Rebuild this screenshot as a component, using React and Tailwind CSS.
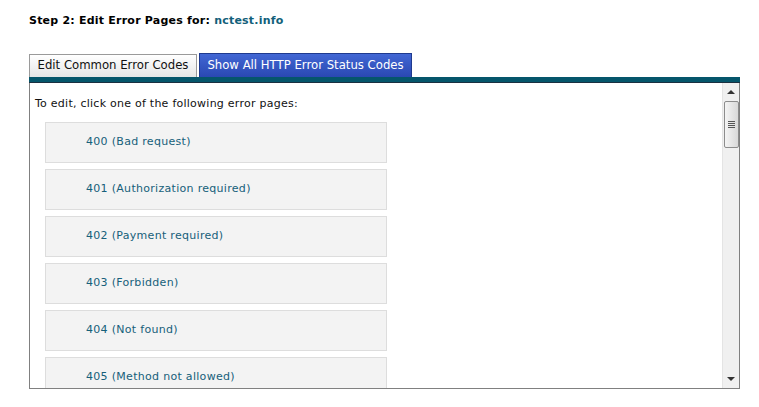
import React from 'react';

const errorPages = [
  '400 (Bad request)',
  '401 (Authorization required)',
  '402 (Payment required)',
  '403 (Forbidden)',
  '404 (Not found)',
  '405 (Method not allowed)',
];

const App = () => {
  return (
    <div className="w-[759px] h-[407px] bg-white overflow-hidden font-['DejaVu_Sans',Verdana,sans-serif] text-black">
      <div className="pl-[29px] pt-[14px]">
        <h2 className="text-[11px] font-bold leading-[14px] tracking-[0.22px]">
          Step 2: Edit Error Pages for: <span className="text-[#12607a]">nctest.info</span>
        </h2>

        <div className="w-[711px] mt-[25px]">
          <div className="flex items-end gap-[2px] h-[24px]">
            <div className="h-[23px] w-[168px] border border-b-0 border-[#9a9a9a] bg-gradient-to-b from-white to-[#e6e6e6] flex items-center justify-center text-[11.7px] text-[#111]">
              Edit Common Error Codes
            </div>
            <div className="h-[24px] w-[213px] border border-b-0 border-[#1f3a8f] bg-gradient-to-b from-[#4267d4] to-[#2a48b2] flex items-center justify-center text-[11.7px] text-white">
              Show All HTTP Error Status Codes
            </div>
          </div>
          <div className="h-[6px] bg-[#05566b] border-b border-[#1b3040]"></div>

          <div className="h-[306px] border border-t-0 border-[#808080] flex">
            <div className="flex-1 overflow-hidden pt-[14px] pl-[5px]">
              <p className="text-[11px] leading-[14px] tracking-[0.25px] text-[#111]">To edit, click one of the following error pages:</p>
              <div className="mt-[11px] ml-[10px] flex flex-col gap-[6px]">
                {errorPages.map((page) => (
                  <div
                    key={page}
                    className="w-[342px] h-[41px] shrink-0 border border-[#dddddd] bg-[#f3f3f3] flex items-center pl-[40px] pb-[1px] text-[11px] tracking-[0.3px] text-[#16607a]"
                  >
                    {page}
                  </div>
                ))}
              </div>
            </div>

            <div className="w-[17px] bg-[#f0f0f0] border-l border-[#e4e4e4] flex flex-col items-center">
              <div className="h-[18px] flex items-center justify-center">
                <div className="w-0 h-0 border-l-[4px] border-r-[4px] border-b-[4px] border-l-transparent border-r-transparent border-b-[#333]"></div>
              </div>
              <div className="w-[15px] h-[47px] rounded-[2px] border border-[#8c8c8c] bg-gradient-to-r from-[#f4f4f4] to-[#d8d8d8] flex flex-col items-center justify-center gap-[1px]">
                <div className="w-[7px] h-[1px] bg-[#555]"></div>
                <div className="w-[7px] h-[1px] bg-[#555]"></div>
                <div className="w-[7px] h-[1px] bg-[#555]"></div>
                <div className="w-[7px] h-[1px] bg-[#555]"></div>
              </div>
              <div className="flex-1"></div>
              <div className="h-[18px] flex items-center justify-center">
                <div className="w-0 h-0 border-l-[4px] border-r-[4px] border-t-[4px] border-l-transparent border-r-transparent border-t-[#333]"></div>
              </div>
            </div>
          </div>
        </div>
      </div>
    </div>
  );
};

export default App;
